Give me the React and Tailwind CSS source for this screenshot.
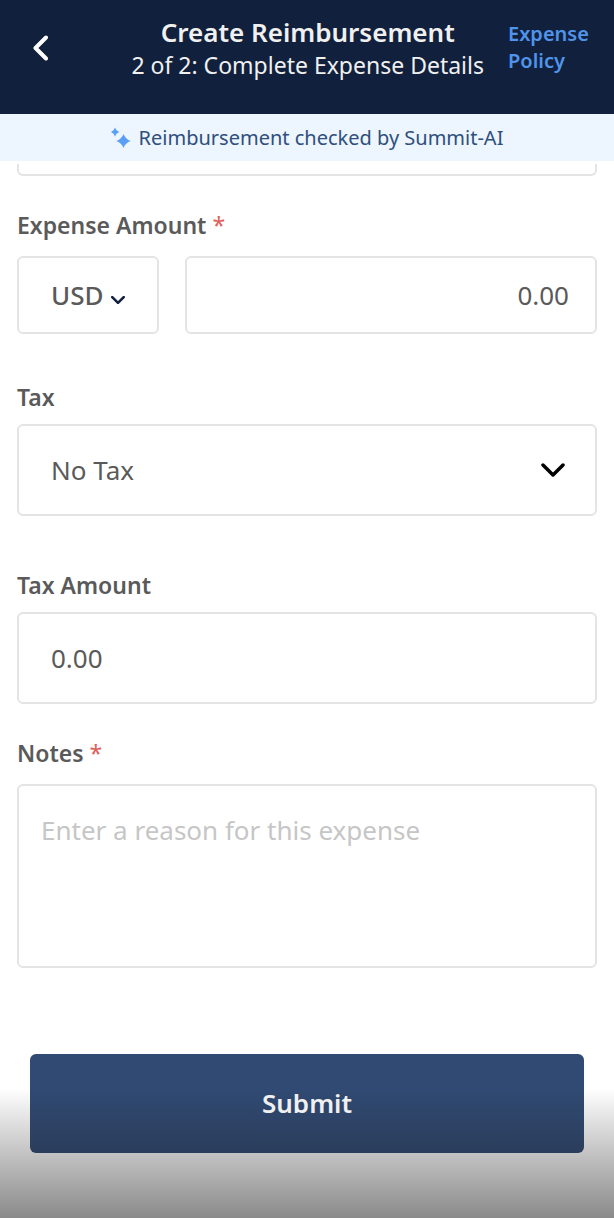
import { useState } from "react";

const fieldClass =
  "w-full rounded-md border-2 border-[#e4e4e4] bg-white text-[26px] text-[#5a5a5a] outline-none focus:border-[#2f4a73]";

const SparklesIcon = () => (
  <svg viewBox="0 0 20 22" className="h-[22px] w-5 shrink-0 fill-[#5a9ff5]" aria-hidden="true">
    <path d="M4 0.5 Q4.9 3.9 8.2 5 Q4.9 6.1 4 9.5 Q3.1 6.1 0 5 Q3.1 3.9 4 0.5Z" />
    <path d="M12.5 7 Q14.4 12.2 19.8 14 Q14.4 15.8 12.5 21 Q10.6 15.8 5.2 14 Q10.6 12.2 12.5 7Z" />
  </svg>
);

const Chevron = ({ className }) => (
  <svg
    viewBox="0 0 24 14"
    className={className}
    fill="none"
    stroke="currentColor"
    strokeLinecap="round"
    strokeLinejoin="round"
    aria-hidden="true"
  >
    <path d="M2 2 L12 12 L22 2" />
  </svg>
);

const Label = ({ htmlFor, required, children }) => (
  <label htmlFor={htmlFor} className="block text-[23px] leading-8 font-semibold text-[#5a5a5a]">
    {children}
    {required && <span className="font-normal text-[#e0605c]"> *</span>}
  </label>
);

const Header = () => (
  <header className="flex items-start justify-between bg-[#11203c] pt-4 pr-[26px] pb-8 pl-8 text-[#f0f0f0]">
    <button type="button" aria-label="Back" className="mt-[18px] flex h-7 w-4 items-center justify-center">
      <svg
        viewBox="0 0 16 26"
        className="h-[26px] w-4"
        fill="none"
        stroke="white"
        strokeWidth="4"
        strokeLinecap="round"
        strokeLinejoin="round"
        aria-hidden="true"
      >
        <path d="M14 2.500 L3.500 13 L14 23.500" />
      </svg>
    </button>

    <div className="ml-auto text-center">
      <h1 className="text-[26px] leading-8 font-semibold">Create Reimbursement</h1>
      <p className="text-[23px] leading-[34px]">2 of 2: Complete Expense Details</p>
    </div>

    <a href="#policy" className="mt-1 ml-6 w-20 text-[20px] leading-[27px] font-semibold text-[#4f94ea]">
      Expense Policy
    </a>
  </header>
);

const App = () => {
  const [currency, setCurrency] = useState("USD");
  const [amount, setAmount] = useState("0.00");
  const [tax, setTax] = useState("none");
  const [taxAmount, setTaxAmount] = useState("0.00");
  const [notes, setNotes] = useState("");

  return (
    <div className="min-h-screen bg-white font-['Noto_Sans',sans-serif]">
      <Header />

      <div className="flex h-[47px] items-center justify-center gap-2 bg-[#edf5fe] text-xl text-[#2f4f7c]">
        <SparklesIcon />
        <p>Reimbursement checked by Summit-AI</p>
      </div>

      <form onSubmit={(e) => e.preventDefault()}>
        <div className="px-[17px] pt-[3px]">
          {/* lower edge of the field scrolled under the banner */}
          <div className="h-3 rounded-b-md border-2 border-t-0 border-[#e4e4e4]" />

          <div className="mt-[33px]">
            <Label htmlFor="amount" required>
              Expense Amount
            </Label>
            <div className="mt-[15px] flex gap-[26px]">
              <div className="relative w-[142px] shrink-0">
                <select
                  aria-label="Currency"
                  value={currency}
                  onChange={(e) => setCurrency(e.target.value)}
                  className={`${fieldClass} h-[78px] appearance-none pl-8 font-medium`}
                >
                  <option>USD</option>
                  <option>EUR</option>
                  <option>GBP</option>
                </select>
                <Chevron className="pointer-events-none absolute top-10 right-[34px] h-2 w-[14px] stroke-[4.5] text-[#11203c]" />
              </div>
              <input
                id="amount"
                inputMode="decimal"
                value={amount}
                onChange={(e) => setAmount(e.target.value)}
                className={`${fieldClass} h-[78px] min-w-0 flex-1 px-[26px] text-right`}
              />
            </div>
          </div>

          <div className="mt-[47px]">
            <Label htmlFor="tax">Tax</Label>
            <div className="relative mt-[11px]">
              <select
                id="tax"
                value={tax}
                onChange={(e) => setTax(e.target.value)}
                className={`${fieldClass} h-[92px] appearance-none px-8`}
              >
                <option value="none">No Tax</option>
                <option value="vat">VAT</option>
              </select>
              <Chevron className="pointer-events-none absolute top-[39px] right-8 h-[14px] w-6 stroke-[3.5] text-black" />
            </div>
          </div>

          <div className="mt-[53px]">
            <Label htmlFor="tax-amount">Tax Amount</Label>
            <input
              id="tax-amount"
              inputMode="decimal"
              value={taxAmount}
              onChange={(e) => setTaxAmount(e.target.value)}
              className={`${fieldClass} mt-[11px] block h-[92px] px-8`}
            />
          </div>

          <div className="mt-[33px]">
            <Label htmlFor="notes" required>
              Notes
            </Label>
            <textarea
              id="notes"
              placeholder="Enter a reason for this expense"
              value={notes}
              onChange={(e) => setNotes(e.target.value)}
              className={`${fieldClass} mt-[15px] block h-[184px] resize-none px-[22px] py-[26px] leading-9 placeholder:text-[#c6c6c6]`}
            />
          </div>
        </div>

        <div className="bg-linear-to-b from-white from-48% to-[#8a8a8a] px-[30px] pt-[86px] pb-[66px]">
          <button
            type="submit"
            className="h-[99px] w-full rounded-md bg-linear-to-b from-[#304a73] from-35% to-[#2b3d5b] text-[26px] font-semibold text-[#f0f0f0]"
          >
            Submit
          </button>
        </div>
      </form>
    </div>
  );
};

export default App;
